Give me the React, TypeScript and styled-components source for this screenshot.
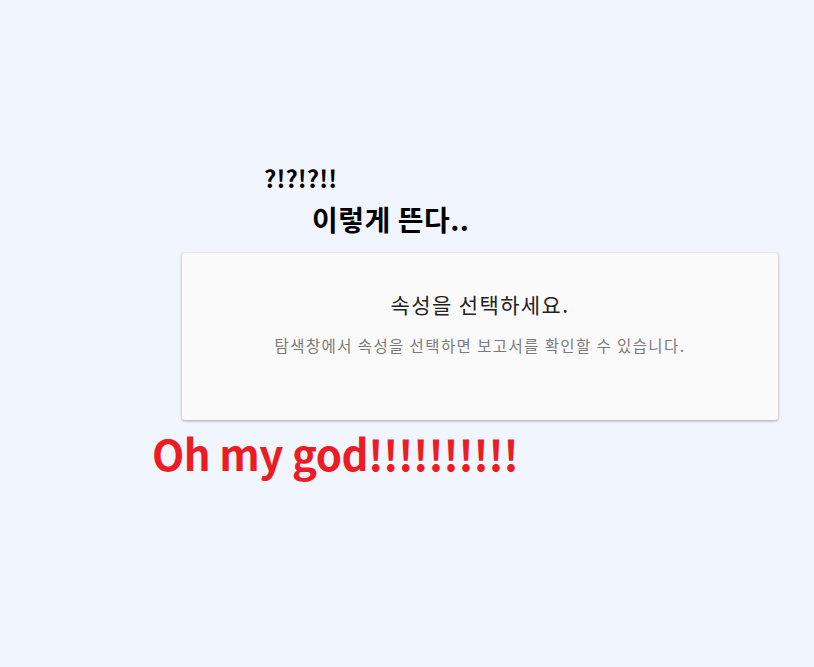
import React from "react";
import styled, { createGlobalStyle } from "styled-components";

const GlobalStyle = createGlobalStyle`
  html, body {
    margin: 0;
    padding: 0;
    background: #f1f5fd;
    font-family: "Noto Sans CJK KR", "Noto Sans", sans-serif;
  }
`;

const Page = styled.div`
  min-height: 667px;
  padding-top: 162px;
  box-sizing: border-box;
`;

const Shout = styled.h3<{ $indent: number; $size: number; $gap?: number; $track?: number }>`
  margin: ${(p) => p.$gap ?? 0}px 0 0 ${(p) => p.$indent}px;
  font-size: ${(p) => p.$size}px;
  font-weight: 700;
  color: #000;
  line-height: 1.3;
  letter-spacing: ${(p) => p.$track ?? 0}px;
`;

const Card = styled.div`
  margin: 15px 0 0 182px;
  width: 596px;
  height: 167px;
  box-sizing: border-box;
  background: #fafafa;
  border-radius: 3px;
  box-shadow: 0 1px 3px rgba(0, 0, 0, 0.35);
  display: flex;
  flex-direction: column;
  align-items: center;
  padding-top: 36px;
`;

const CardTitle = styled.div`
  font-size: 21px;
  letter-spacing: 1.4px;
  color: #222;
  line-height: 30px;
`;

const CardText = styled.div`
  margin-top: 16px;
  font-size: 15.5px;
  letter-spacing: 1.4px;
  color: #7a7a7a;
  line-height: 20px;
`;

const Alarm = styled.h1`
  margin: 6px 0 0 152px;
  font-size: 42px;
  font-weight: 700;
  letter-spacing: -0.5px;
  color: #ed1c24;
  line-height: 1.3;
`;

function App() {
  return (
    <>
      <GlobalStyle />
      <Page>
        <Shout $indent={264} $size={24} $track={0.1}>?!?!?!!</Shout>
        <Shout $indent={312} $size={28} $gap={8} $track={0.5}>이렇게 뜬다..</Shout>
        <Card>
          <CardTitle>속성을 선택하세요.</CardTitle>
          <CardText>탐색창에서 속성을 선택하면 보고서를 확인할 수 있습니다.</CardText>
        </Card>
        <Alarm>Oh my god!!!!!!!!!!</Alarm>
      </Page>
    </>
  );
}

export default App;
